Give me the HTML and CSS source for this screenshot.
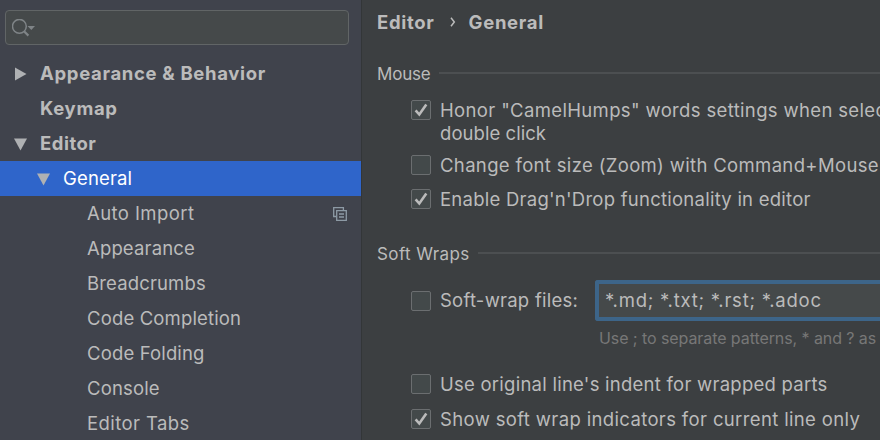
FILE: index.html
```html
<!DOCTYPE html>
<html lang="en">
<head>
<meta charset="utf-8">
<title>Settings</title>
<link rel="stylesheet" href="styles.css">
</head>
<body>
<div class="settings">
  <aside class="sidebar">
    <div class="search">
      <svg class="search-icon" width="26" height="20" viewBox="0 0 26 20"><circle cx="7.400" cy="7.300" r="6.900" fill="none" stroke="#7f8487" stroke-width="1.5"/><path d="M12 12.300l4.400 4.300" fill="none" stroke="#7f8487" stroke-width="2.200"/><path d="M15.500 7h7.500l-3.700 4z" fill="#7f8487"/></svg>
    </div>
    <ul class="tree">
      <li class="row top"><svg class="arrow" width="13" height="14" viewBox="0 0 13 14"><path d="M1 .5v13L12.500 7z"/></svg><span>Appearance &amp; Behavior</span></li>
      <li class="row top"><span class="arrow"></span><span>Keymap</span></li>
      <li class="row top editor"><svg class="arrow" width="13" height="14" viewBox="0 0 13 14"><path d="M0 1.400h13L6.500 13.500z"/></svg><span>Editor</span></li>
      <li class="row group selected"><svg class="arrow" width="13" height="14" viewBox="0 0 13 14"><path d="M0 1.400h13L6.500 13.500z"/></svg><span>General</span></li>
      <li class="row leaf wide"><span>Auto Import</span>
        <svg class="copy" width="14" height="14" viewBox="0 0 14 14"><path d="M3 9.500H.7V.7h9.700V3M3.700 3.700h9.600v9.600H3.700zM6 7h5M6 10h5" fill="none" stroke="#8d9aa5" stroke-width="1.300"/></svg></li>
      <li class="row leaf"><span>Appearance</span></li>
      <li class="row leaf"><span>Breadcrumbs</span></li>
      <li class="row leaf"><span>Code Completion</span></li>
      <li class="row leaf"><span>Code Folding</span></li>
      <li class="row leaf"><span>Console</span></li>
      <li class="row leaf wide"><span>Editor Tabs</span></li>
    </ul>
  </aside>
  <main class="content">
    <nav class="crumbs"><span>Editor</span><svg width="6" height="10" viewBox="0 0 6 10"><path d="M1 .8l3.300 4.200L1 9.200" fill="none" stroke="#bbb" stroke-width="1.500"/></svg><span>General</span></nav>
    <h2 class="section mouse">Mouse</h2>
    <div class="option camel"><span class="box"><svg width="20" height="20" viewBox="0 0 20 20"><path d="M4.600 10.300l3.700 4.200L15.300 4.500"/></svg></span><span class="label">Honor "CamelHumps" words settings when selec<br><span class="second">double click</span></span></div>
    <div class="option zoom"><span class="box"></span><span class="label">Change font size (Zoom) with Command+Mouse</span></div>
    <div class="option drag"><span class="box"><svg width="20" height="20" viewBox="0 0 20 20"><path d="M4.600 10.300l3.700 4.200L15.300 4.500"/></svg></span><span class="label">Enable Drag'n'Drop functionality in editor</span></div>
    <h2 class="section wraps">Soft Wraps</h2>
    <div class="option files"><span class="box"></span><span class="label">Soft-wrap files:</span><div class="field">*.md; *.txt; *.rst; *.adoc</div></div>
    <p class="hint">Use ; to separate patterns, * and ? as</p>
    <div class="option indent"><span class="box"></span><span class="label">Use original line's indent for wrapped parts</span></div>
    <div class="option indicators"><span class="box"><svg width="20" height="20" viewBox="0 0 20 20"><path d="M4.600 10.300l3.700 4.200L15.300 4.500"/></svg></span><span class="label">Show soft wrap indicators for current line only</span></div>
  </main>
</div>
</body>
</html>
```
FILE: styles.css
```css
* { box-sizing: border-box; }
body { margin: 0; background: #3c3f41; color: #bbbbbb; font: 18.5px/23px Inter, "Liberation Sans", sans-serif; overflow: hidden; }
.settings { display: flex; width: 880px; height: 440px; overflow: hidden; }
.sidebar { flex: none; width: 362px; background: #40434c; border-right: 1px solid #333638; padding-top: 10px; overflow: hidden; }
.search { width: 344px; height: 35px; margin-left: 5px; border: 1.5px solid #616566; border-radius: 4px; background: #45494a; display: flex; padding: 8px 0 0 6px; }
.tree { list-style: none; margin: 11px 0 0; padding: 0; }
.row { display: flex; align-items: center; height: 35px; white-space: nowrap; letter-spacing: .15px; }
.top { font-weight: 700; padding-left: 14px; letter-spacing: .67px; }
.editor { letter-spacing: .5px; }
.group { padding-left: 37px; }
.leaf { padding-left: 87px; padding-right: 14px; }
.wide { letter-spacing: .42px; }
.selected { background: #2f65ca; color: #fff; }
.arrow { flex: none; width: 13px; margin-right: 13px; fill: #afb1b3; }
.copy { margin-left: auto; }
.content { flex: 1; min-width: 0; padding: 10px 0 0 15px; overflow: hidden; white-space: nowrap; }
.crumbs { display: flex; align-items: center; font-weight: 700; letter-spacing: .7px; height: 24px; }
.crumbs svg { margin: 0 13px 0 15px; }
.section { display: flex; align-items: center; margin: 0; font-size: 17px; font-weight: 400; letter-spacing: .4px; }
.section::after { content: ""; flex: 1; height: 2px; margin: 0 0 3px 8px; background: #4c4f51; }
.mouse { margin-top: 29px; letter-spacing: -.2px; }
.wraps { margin-top: 32px; }
.option { display: flex; align-items: flex-start; margin-left: 34px; letter-spacing: .25px; }
.box { flex: none; width: 20px; height: 20px; margin: 1px 9px 0 0; border: 1px solid #6b6e70; border-radius: 2px; background: #43494a; }
.box svg { display: block; margin: -1px; fill: none; stroke: #bbbbbb; stroke-width: 2.6; }
.camel { margin-top: 13px; letter-spacing: .35px; }
.second { letter-spacing: .05px; }
.zoom { margin-top: 9px; letter-spacing: .34px; }
.drag { margin-top: 11px; }
.files { margin-top: 14px; align-items: center; height: 41px; }
.files .box { margin-top: 0; }
.field { flex: 1; height: 41px; margin-left: 17px; border: 4px solid #3d6589; border-right: 0; border-radius: 3px 0 0 3px; padding: 5px 0 0 6px; background: #45494a; letter-spacing: .76px; }
.hint { margin: 6px 0 0 222px; font-size: 16px; color: #777777; letter-spacing: -.08px; }
.indent { margin-top: 23px; }
.indicators { margin-top: 12px; letter-spacing: .36px; }
```
